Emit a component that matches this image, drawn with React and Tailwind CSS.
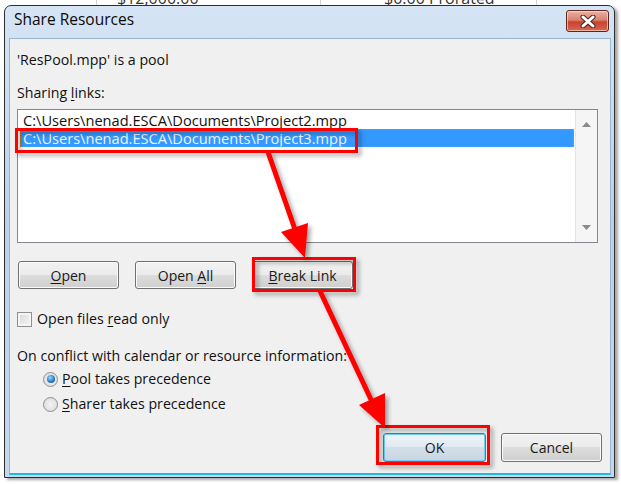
import React from "react";

const btn =
  "h-[28px] w-[101px] rounded-[3px] border border-[#707070] bg-[linear-gradient(to_bottom,#f2f2f2_0%,#ebebeb_50%,#dddddd_50%,#cfcfcf_100%)] shadow-[inset_0_0_0_1px_#fbfbfb] flex items-center justify-center text-[#1a1a1a]";

const Btn = ({ pre, u, post, className = "" }) => (
  <div className={`${btn} ${className}`}>
    <span>
      {pre}
      <span className="underline underline-offset-2">{u}</span>
      {post}
    </span>
  </div>
);

const Radio = ({ checked }) => (
  <div className="w-[15px] h-[15px] rounded-full border border-[#8e8f8f] bg-[radial-gradient(circle,#f4f4f4_0%,#d8d8d8_100%)] flex items-center justify-center">
    {checked && (
      <div className="w-[8px] h-[8px] rounded-full bg-[radial-gradient(circle_at_40%_35%,#9fd8ff_0%,#2a7cc4_55%,#0f4f8c_100%)]" />
    )}
  </div>
);

const Arrows = () => (
  <svg className="absolute inset-0 pointer-events-none" width="621" height="484">
    <defs>
      <filter id="sh" x="-20%" y="-20%" width="140%" height="140%">
        <feDropShadow dx="3" dy="3" stdDeviation="2" floodColor="#000" floodOpacity="0.35" />
      </filter>
    </defs>
    <g filter="url(#sh)" fill="none" stroke="#ff0000" strokeWidth="3">
      <rect x="16.5" y="129.5" width="340" height="22" />
      <rect x="253.5" y="258.5" width="101" height="32" />
      <rect x="377.5" y="426.5" width="111" height="37" />
    </g>
    <g filter="url(#sh)" fill="#ff0000">
      <line x1="268" y1="152" x2="298" y2="238" stroke="#ff0000" strokeWidth="5" />
      <polygon points="305,258 308,223 281,232" />
      <line x1="320" y1="291" x2="375" y2="408" stroke="#ff0000" strokeWidth="5" />
      <polygon points="385,428 385,393 359,405" />
    </g>
  </svg>
);

export default function App() {
  return (
    <div className="relative w-[621px] h-[484px] bg-white overflow-hidden font-['Open_Sans',sans-serif] text-[14.2px] text-[#111]">
      {/* spreadsheet behind the dialog */}
      <div className="h-[5px] overflow-hidden flex text-[16px] text-[#333]">
        <div className="w-[97px] border-r border-[#d4d4d4]" />
        <div className="w-[224px] border-r border-[#d4d4d4] pl-[20px] mt-[-14px]">$12,000.00</div>
        <div className="w-[216px] border-r border-[#d4d4d4] pl-[63px] mt-[-14px]">$0.00 Prorated</div>
        <div className="flex-1" />
      </div>

      {/* dialog window */}
      <div className="ml-[4px] w-[611px] h-[473px] border border-[#2e2e2e] rounded-t-[7px] shadow-[3px_2px_3px_rgba(0,0,0,0.35)] bg-[linear-gradient(to_bottom,#d6e5f5_0%,#bad1ec_45%,#c3d8ef_100%)] flex flex-col overflow-hidden">
        <div className="h-[32px] flex items-center justify-between pl-[9px] pr-[5px]">
          <span className="text-[15.5px] text-[#0a0a0a] mt-[-4px]">Share Resources</span>
          <div className="w-[43px] h-[22px] mt-[-2px] rounded-[3px] border border-[#5e2620] bg-[linear-gradient(to_bottom,#e9b1a5_0%,#d9826f_45%,#c8412f_55%,#d86a52_100%)] shadow-[inset_0_0_0_1px_rgba(255,230,220,0.6)] flex items-center justify-center">
            <svg width="16" height="13" viewBox="0 0 16 13">
              <path d="M3 2 L13 11 M13 2 L3 11" stroke="#4a2520" strokeWidth="5" strokeLinecap="round" />
              <path d="M3 2 L13 11 M13 2 L3 11" stroke="#ffffff" strokeWidth="3" strokeLinecap="round" />
            </svg>
          </div>
        </div>

        <div className="flex-1 ml-[4px] mr-[3px] mb-[2px] bg-[#f0f0f0] border border-[#9db4cf] border-b-[#23b8e0] border-b-2 flex flex-col pl-[7px] pr-[8px]">
          <div className="mt-[12px] h-[18px] leading-[18px]">'ResPool.mpp' is a pool</div>
          <div className="mt-[15px] h-[18px] leading-[18px]">
            Sharing <span className="underline underline-offset-2">l</span>inks:
          </div>

          <div className="mt-[7px] h-[134px] w-[581px] border border-[#828790] bg-white flex">
            <div className="flex-1 pt-[1px] pl-[2px] pr-[1px] text-[14.6px]">
              <div className="h-[18px] leading-[18px] pl-[3px] text-[#111]">
                C:\Users\nenad.ESCA\Documents\Project2.mpp
              </div>
              <div className="h-[18px] leading-[18px] pl-[3px] bg-[#3399ff] text-[#eef4ff] outline-1 outline-dotted outline-[#c88a3a] -outline-offset-1">
                C:\Users\nenad.ESCA\Documents\Project3.mpp
              </div>
            </div>
            <div className="w-[22px] bg-[#f5f5f5] border-l border-[#e4e4e4] flex flex-col justify-between items-center py-[12px]">
              <svg width="9" height="5" viewBox="0 0 9 5">
                <path d="M0 5 L4.5 0 L9 5 Z" fill="#8a8a8a" />
              </svg>
              <svg width="9" height="5" viewBox="0 0 9 5">
                <path d="M0 0 L4.5 5 L9 0 Z" fill="#8a8a8a" />
              </svg>
            </div>
          </div>

          <div className="mt-[18px] flex gap-[16px] ml-[1px] text-[14px]">
            <Btn u="O" post="pen" />
            <Btn pre="Open " u="A" post="ll" />
            <Btn u="B" post="reak Link" />
          </div>

          <div className="mt-[21px] h-[18px] flex items-center gap-[5px]">
            <div className="w-[15px] h-[15px] border border-[#8e8f8f] bg-[linear-gradient(135deg,#d8d8d8_0%,#f6f6f6_100%)] shadow-[inset_0_0_0_2px_#f4f4f4]" />
            <span>
              Open files <span className="underline underline-offset-2">r</span>ead only
            </span>
          </div>

          <div className="mt-[19px] h-[18px] leading-[18px]">On conflict with calendar or resource information:</div>
          <div className="mt-[5px] h-[18px] flex items-center gap-[4px] ml-[26px]">
            <Radio checked />
            <span>
              <span className="underline underline-offset-2">P</span>ool takes precedence
            </span>
          </div>
          <div className="mt-[7px] h-[18px] flex items-center gap-[4px] ml-[26px]">
            <Radio />
            <span>
              <span className="underline underline-offset-2">S</span>harer takes precedence
            </span>
          </div>

          <div className="mt-[20px] flex justify-end gap-[15px] text-[14px]">
            <div className="h-[29px] w-[103px] rounded-[3px] border border-[#3c7fb1] bg-[linear-gradient(to_bottom,#eef4f9_0%,#e1eaf2_50%,#d3dee8_50%,#c9d6e2_100%)] shadow-[inset_0_0_0_1px_#6fd0f5] flex items-center justify-center text-[#1a1a1a]">
              OK
            </div>
            <div className={`${btn} h-[29px] w-[101px]`}>Cancel</div>
          </div>
        </div>
      </div>

      <Arrows />
    </div>
  );
}
